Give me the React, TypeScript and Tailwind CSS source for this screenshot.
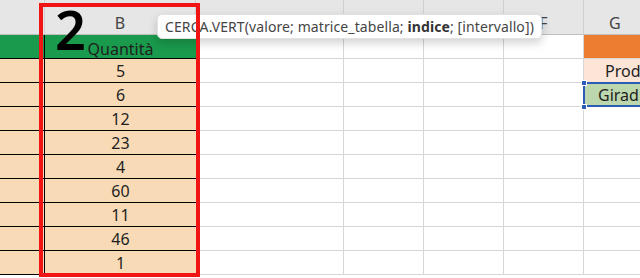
const COLS = ['', 'B', 'C', 'D', 'E', 'F', 'G'];
const QTY = [5, 6, 12, 23, 4, 60, 11, 46, 1];

function HeaderCell({ label }: { label: string }) {
  return (
    <div
      className={`h-[35px] bg-[#e6e6e6] border-b border-r border-b-[#bfbfbf] border-r-[#d0d0d0] flex items-end pb-[3px] text-[16px] leading-none text-[#444] ${
        label === 'G' ? 'justify-start pl-[25px]' : 'justify-center'
      }`}
    >
      {label}
    </div>
  );
}

function WhiteCell() {
  return <div className="h-6 bg-white border-b border-r border-[#d6d6d6]" />;
}

export default function App() {
  const rows = [0, 1, 2, 3, 4, 5, 6, 7, 8, 9];
  return (
    <div
      className="relative w-[640px] h-[278px] overflow-hidden bg-white"
      style={{ fontFamily: '"Noto Sans", "Open Sans", sans-serif' }}
    >
      <div className="grid grid-cols-[45px_151px_148px_80px_80px_80px_110px] w-[694px]">
        {COLS.map((c, i) => (
          <HeaderCell key={i} label={c} />
        ))}

        {rows.map((r) => {
          const isHead = r === 0;
          return [
            // column A
            <div
              key={`a${r}`}
              className={`h-6 border-b border-r border-black ${isHead ? 'bg-[#1a9a4c]' : 'bg-[#f8dbb6]'}`}
            />,
            // column B
            <div
              key={`b${r}`}
              className={`h-6 border-b border-black flex justify-center text-[16px] leading-none text-[#1e1e1e] ${
                isHead ? 'bg-[#1a9a4c] items-end pb-[1px]' : 'bg-[#f8dbb6] items-center'
              }`}
            >
              {isHead ? 'Quantità' : QTY[r - 1]}
            </div>,
            <WhiteCell key={`c${r}`} />,
            <WhiteCell key={`d${r}`} />,
            <WhiteCell key={`e${r}`} />,
            <WhiteCell key={`f${r}`} />,
            // column G
            r === 0 ? (
              <div key={`g${r}`} className="h-6 bg-[#ed7d31] border-b border-[#d6d6d6]" />
            ) : r === 1 ? (
              <div
                key={`g${r}`}
                className="h-6 bg-[#fce4d6] border-b border-[#d6d6d6] flex items-center pl-[21px] text-[16px] text-[#1e1e1e]"
              >
                Prodotto
              </div>
            ) : r === 2 ? (
              <div
                key={`g${r}`}
                className="relative h-6 bg-[#bcd6ad] border-b border-[#d6d6d6] flex items-center pl-[14px] text-[16px] text-[#1e1e1e]"
              >
                Giradischi
                <div className="absolute -left-px -top-px right-0 -bottom-px border-2 border-[#2a5cb8]" />
                <div className="absolute -left-[3px] -top-[3px] w-[6px] h-[6px] bg-[#2a5cb8] border border-white" />
                <div className="absolute -left-[3px] -bottom-[4px] w-[6px] h-[6px] bg-[#2a5cb8] border border-white" />
              </div>
            ) : (
              <WhiteCell key={`g${r}`} />
            ),
          ];
        })}
      </div>

      {/* formula tooltip */}
      <div className="absolute left-[157px] top-[14px] w-[385px] h-[25px] bg-white rounded-[5px] border border-[#e2e2e2] shadow-[0_4px_10px_rgba(0,0,0,0.18)] flex items-center pl-[7px] text-[14px] tracking-[0.1px] text-[#454545] whitespace-nowrap">
        CERCA.VERT(valore; matrice_tabella;&nbsp;<b className="font-bold text-[#333]">indice</b>; [intervallo])
      </div>

      {/* red highlight */}
      <div className="absolute left-[39px] top-[3px] w-[161px] h-[274px] border-4 border-[#f01414]" />

      {/* step number */}
      <div className="absolute left-[55px] top-[-4px] text-[54px] font-semibold text-black leading-none pt-[6px]">
        2
      </div>
    </div>
  );
}
